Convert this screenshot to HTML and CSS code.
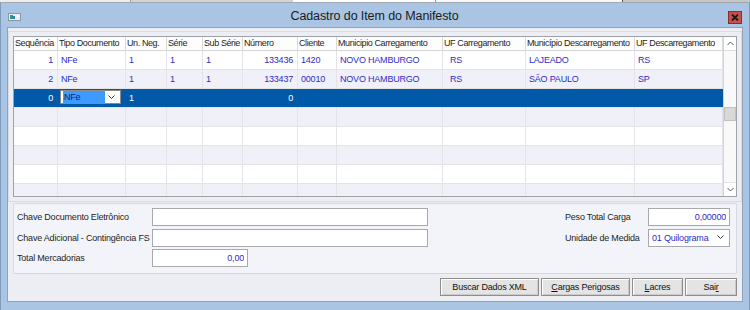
FILE: index.html
```html
<!DOCTYPE html>
<html lang="pt-BR">
<head>
    <meta charset="UTF-8">
    <title>Cadastro do Item do Manifesto</title>
    <link rel="stylesheet" href="styles.css">
</head>
<body>
    <div class="desk-strip">
        <span class="seg seg-a"></span>
        <span class="seg seg-b"></span>
        <span class="seg seg-c"></span>
        <span class="seg seg-d"></span>
        <span class="seg seg-e"></span>
    </div>

    <div class="window">
        <div class="titlebar">
            <svg class="app-icon" width="13" height="8" viewBox="0 0 13 8">
                <rect x="0.5" y="0.5" width="12" height="7" fill="#e9eef3" stroke="#8a98a6"/>
                <rect x="2" y="2" width="3" height="4" fill="#2f9a7a"/>
                <rect x="5" y="3" width="2" height="3" fill="#3a78c8"/>
                <rect x="9" y="2" width="2" height="2" fill="#ffffff"/>
            </svg>
            <span class="title">Cadastro do Item do Manifesto</span>
            <button class="close-btn" title="Fechar">
                <svg width="8" height="7" viewBox="0 0 8 7">
                    <path d="M1 0.5 L7 6.5 M7 0.5 L1 6.5" stroke="#1a1a1a" stroke-width="1.8"/>
                </svg>
            </button>
        </div>

        <div class="client">
            <div class="grid-panel">
                <div class="grid">
                    <div class="grid-body">
                        <div class="row head">
                            <div class="cell">Sequência</div>
                            <div class="cell">Tipo Documento</div>
                            <div class="cell">Un. Neg.</div>
                            <div class="cell">Série</div>
                            <div class="cell">Sub Série</div>
                            <div class="cell">Número</div>
                            <div class="cell">Cliente</div>
                            <div class="cell">Municipio Carregamento</div>
                            <div class="cell">UF Carregamento</div>
                            <div class="cell">Município Descarregamento</div>
                            <div class="cell">UF Descarregamento</div>
                        </div>

                        <div class="row">
                            <div class="cell num">1</div>
                            <div class="cell">NFe</div>
                            <div class="cell">1</div>
                            <div class="cell">1</div>
                            <div class="cell">1</div>
                            <div class="cell num">133436</div>
                            <div class="cell">1420</div>
                            <div class="cell">NOVO HAMBURGO</div>
                            <div class="cell uf">RS</div>
                            <div class="cell">LAJEADO</div>
                            <div class="cell">RS</div>
                        </div>
                        <div class="row alt">
                            <div class="cell num">2</div>
                            <div class="cell">NFe</div>
                            <div class="cell">1</div>
                            <div class="cell">1</div>
                            <div class="cell">1</div>
                            <div class="cell num">133437</div>
                            <div class="cell">00010</div>
                            <div class="cell">NOVO HAMBURGO</div>
                            <div class="cell uf">RS</div>
                            <div class="cell">SÃO PAULO</div>
                            <div class="cell">SP</div>
                        </div>
                        <div class="row selected">
                            <div class="cell num">0</div>
                            <div class="cell editor-cell">
                                <div class="editor">
                                    <span class="editor-text">NFe</span>
                                    <svg width="7" height="5" viewBox="0 0 7 5"><path d="M0.5 0.5 L3.5 3.5 L6.5 0.5" fill="none" stroke="#333" stroke-width="1"/></svg>
                                </div>
                            </div>
                            <div class="cell">1</div>
                            <div class="cell"></div>
                            <div class="cell"></div>
                            <div class="cell num">0</div>
                            <div class="cell"></div>
                            <div class="cell"></div>
                            <div class="cell"></div>
                            <div class="cell"></div>
                            <div class="cell"></div>
                        </div>
                        <div class="row alt empty">
                            <div class="cell"></div><div class="cell"></div><div class="cell"></div><div class="cell"></div><div class="cell"></div><div class="cell"></div><div class="cell"></div><div class="cell"></div><div class="cell"></div><div class="cell"></div><div class="cell"></div>
                        </div>
                        <div class="row empty">
                            <div class="cell"></div><div class="cell"></div><div class="cell"></div><div class="cell"></div><div class="cell"></div><div class="cell"></div><div class="cell"></div><div class="cell"></div><div class="cell"></div><div class="cell"></div><div class="cell"></div>
                        </div>
                        <div class="row alt empty">
                            <div class="cell"></div><div class="cell"></div><div class="cell"></div><div class="cell"></div><div class="cell"></div><div class="cell"></div><div class="cell"></div><div class="cell"></div><div class="cell"></div><div class="cell"></div><div class="cell"></div>
                        </div>
                        <div class="row empty">
                            <div class="cell"></div><div class="cell"></div><div class="cell"></div><div class="cell"></div><div class="cell"></div><div class="cell"></div><div class="cell"></div><div class="cell"></div><div class="cell"></div><div class="cell"></div><div class="cell"></div>
                        </div>
                        <div class="row alt empty">
                            <div class="cell"></div><div class="cell"></div><div class="cell"></div><div class="cell"></div><div class="cell"></div><div class="cell"></div><div class="cell"></div><div class="cell"></div><div class="cell"></div><div class="cell"></div><div class="cell"></div>
                        </div>
                    </div>

                    <div class="scrollbar">
                        <div class="sb-btn">
                            <svg width="7" height="5" viewBox="0 0 7 5"><path d="M0.5 4 L3.5 1 L6.5 4" fill="none" stroke="#555" stroke-width="1"/></svg>
                        </div>
                        <div class="sb-track">
                            <div class="sb-thumb"></div>
                        </div>
                        <div class="sb-btn">
                            <svg width="7" height="5" viewBox="0 0 7 5"><path d="M0.5 1 L3.5 4 L6.5 1" fill="none" stroke="#555" stroke-width="1"/></svg>
                        </div>
                    </div>
                </div>
            </div>

            <div class="form-panel">
                <div class="fields fields-left">
                    <label>Chave Documento Eletrônico</label>
                    <input class="input wide" type="text" value="">
                    <label>Chave Adicional - Contingência FS</label>
                    <input class="input wide" type="text" value="">
                    <label>Total Mercadorias</label>
                    <input class="input short right" type="text" value="0,00">
                </div>

                <div class="fields fields-right">
                    <label>Peso Total Carga</label>
                    <input class="input right" type="text" value="0,00000">
                    <label>Unidade de Medida</label>
                    <div class="input combo">
                        <span>01 Quilograma</span>
                        <svg width="7" height="5" viewBox="0 0 7 5"><path d="M0.5 0.5 L3.5 3.5 L6.5 0.5" fill="none" stroke="#333" stroke-width="1"/></svg>
                    </div>
                </div>
            </div>

            <div class="actions">
                <button class="btn btn-xml">Buscar Dados XML</button>
                <button class="btn btn-cargas"><u>C</u>argas Perigosas</button>
                <button class="btn btn-lacres"><u>L</u>acres</button>
                <button class="btn btn-sair">Sai<u>r</u></button>
            </div>
        </div>
    </div>
</body>
</html>
```

FILE: styles.css
```css
* {
    box-sizing: border-box;
}

body {
    margin: 0;
    width: 750px;
    height: 310px;
    overflow: hidden;
    background-color: #a9c5e3;
    font-family: 'Liberation Sans', Arial, sans-serif;
    font-size: 9px;
    letter-spacing: -0.2px;
    color: #1e1e1e;
}

/* bout de la fenêtre derrière */
.desk-strip {
    display: flex;
    height: 3px;
    border-bottom: 1px solid #9fa7b0;
}

.seg {
    height: 100%;
}

.seg-a { width: 131px; background-color: #eeeeee; border-right: 1px solid #a0a0a0; }
.seg-b { width: 162px; background-color: #d3d3d3; }
.seg-c { width: 143px; background-color: #ffffff; border-right: 1px solid #9a9a9a; }
.seg-d { width: 187px; background-color: #f7f7f7; border-right: 1px solid #505050; }
.seg-e { flex: 1; background-color: #c6c6c6; }

.window {
    height: 307px;
    display: flex;
    flex-direction: column;
    padding: 0 6px 8px 6px;
    border-left: 1px solid #7f9bbb;
    border-right: 1px solid #7f9bbb;
}

.titlebar {
    height: 24px;
    display: flex;
    align-items: flex-start;
}

.app-icon {
    margin: 10px 0 0 1px;
}

.title {
    flex: 1;
    text-align: center;
    font-size: 12.5px;
    letter-spacing: -0.1px;
    line-height: 26px;
    color: #1b1b1b;
}

.close-btn {
    width: 14px;
    height: 13px;
    margin: 8px 1px 0 0;
    padding: 0;
    background-color: #c7504a;
    border: 1px solid #8c2f29;
    display: flex;
    align-items: center;
    justify-content: center;
}

.client {
    flex: 1;
    background-color: #eceef4;
    border: 1px solid #93a3b7;
    display: flex;
    flex-direction: column;
}

/* grade */
.grid-panel {
    margin-top: 3px;
    padding: 4px;
    border: 1px solid #d9dce3;
}

.grid {
    height: 161px;
    display: flex;
    border: 1px solid #9ea2a8;
    background-color: #ffffff;
    overflow: hidden;
}

.grid-body {
    width: 709px;
}

.row {
    display: grid;
    grid-template-columns: 44px 68px 41px 36px 40px 55px 39px 106px 83px 109px 88px;
    height: 19px;
    line-height: 18px;
    border-bottom: 1px solid #e3e4ea;
    color: #2d2dc8;
    background-color: #ffffff;
}

.row.alt {
    background-color: #f0f1f8;
}

.row.head {
    height: 14px;
    line-height: 13px;
    color: #1e1e1e;
    background-color: #fdfdfd;
    border-bottom: 1px solid #d6d6d6;
    letter-spacing: -0.4px;
}

.row.selected {
    background-color: #0259a8;
    color: #ffffff;
}

.cell {
    padding: 0 2px 0 3px;
    border-right: 1px solid #e3e4ea;
    white-space: nowrap;
    overflow: hidden;
}

.row.head .cell {
    padding-left: 1px;
    padding-right: 0;
    border-right-color: #d8d8d8;
}

.row.selected .cell {
    border-right-color: #0259a8;
}

.cell.num {
    text-align: right;
    padding-right: 4px;
}

.cell.uf {
    padding-left: 7px;
}

.cell.editor-cell {
    padding: 1px 4px 0 2px;
}

.editor {
    height: 14px;
    background-color: #ffffff;
    border: 1px solid #8a8a8a;
    display: flex;
    align-items: center;
    justify-content: space-between;
    padding: 0 5px 0 2px;
    line-height: 12px;
}

.editor-text {
    width: 42px;
    background-color: #3d9bff;
    color: #1b1b6e;
    padding-left: 1px;
}

.scrollbar {
    width: 13px;
    display: flex;
    flex-direction: column;
    border-left: 1px solid #d4d4d4;
    background-color: #f9f9f9;
}

.sb-btn {
    height: 14px;
    display: flex;
    align-items: center;
    justify-content: center;
    background-color: #ffffff;
    border-bottom: 1px solid #e0e0e0;
}

.sb-btn:last-child {
    border-bottom: none;
    border-top: 1px solid #e0e0e0;
}

.sb-track {
    flex: 1;
    padding-top: 56px;
}

.sb-thumb {
    height: 14px;
    background-color: #d9d9d9;
    border: 1px solid #c2c2c2;
}

/* formulaire */
.form-panel {
    height: 71px;
    margin: 1px 5px 0 5px;
    padding: 4px 6px 0 3px;
    border: 1px solid #d6d9e0;
    border-radius: 2px;
    background-color: #f3f4f9;
    display: flex;
    justify-content: space-between;
}

.fields {
    display: grid;
    grid-template-rows: 18px 18px 18px;
    row-gap: 2.5px;
    align-items: center;
}

.fields-left {
    grid-template-columns: 135px 276px;
}

.fields-right {
    grid-template-columns: 83px 82px;
}

label {
    white-space: nowrap;
}

.input {
    height: 18px;
    width: 100%;
    border: 1px solid #a7a9ae;
    background-color: #ffffff;
    font-family: 'Liberation Sans', Arial, sans-serif;
    font-size: 9px;
    letter-spacing: -0.2px;
    color: #2d2dc8;
    padding: 0 3px;
    outline: none;
}

.input.short {
    width: 96px;
}

.input.right {
    text-align: right;
}

.combo {
    display: flex;
    align-items: center;
    justify-content: space-between;
    padding: 0 5px 0 3px;
}

/* boutons */
.actions {
    margin-top: 4px;
    padding-right: 5px;
    display: flex;
    justify-content: flex-end;
    gap: 2px;
}

.btn {
    height: 18px;
    padding: 0;
    font-family: 'Liberation Sans', Arial, sans-serif;
    font-size: 9px;
    letter-spacing: -0.2px;
    color: #111111;
    background-color: #e4e4e4;
    border: 1px solid #8e8e8e;
    box-shadow: inset 1px 1px #ffffff, inset -1px -1px #cacaca;
}

.btn-xml { width: 99px; }
.btn-cargas { width: 89px; }
.btn-lacres { width: 51px; }
.btn-sair { width: 52px; }
```
